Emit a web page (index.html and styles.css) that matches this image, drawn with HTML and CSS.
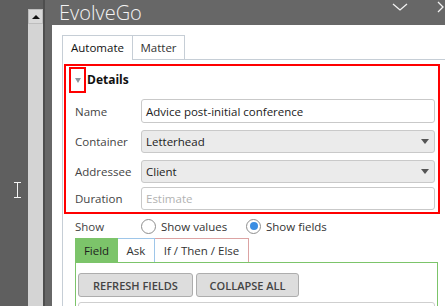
FILE: index.html
```html
<!DOCTYPE html>
<html>
<head>
<meta charset="utf-8">
<link rel="stylesheet" href="styles.css">
</head>
<body>
<div class="app">
  <div class="side">
    <svg class="ibeam" width="8" height="16" viewBox="0 0 8 16"><path d="M0 0.5H7M3.5 0.5V15.5M0 15.5H7" stroke="#f4f4f4" stroke-width="1" fill="none"/></svg>
  </div>
  <div class="scroll">
    <div class="scroll-btn"><span class="arrow-up"></span></div>
    <div class="scroll-track"></div>
  </div>
  <div class="sep"></div>
  <div class="main">
    <div class="titlebar">
      <span class="title">EvolveGo</span>
      <svg class="chev-down" width="16" height="8" viewBox="0 0 16 8"><path d="M1 1L8 7L15 1" stroke="#f2f2f2" stroke-width="1.3" fill="none"/></svg>
      <svg class="chev-right" width="8" height="12" viewBox="0 0 8 12"><path d="M1 1L6 6L1 11" stroke="#f2f2f2" stroke-width="1.3" fill="none"/></svg>
    </div>
    <div class="panel">
      <div class="tabs">
        <div class="tab active">Automate</div>
        <div class="tab matter">Matter</div>
      </div>
      <div class="tab-body">
        <div class="details">
          <div class="details-head">
            <span class="toggle"><svg width="6" height="5" viewBox="0 0 6 5"><path d="M0 0H6L3 5Z" fill="#8c979d"/></svg></span>
            <span class="details-title">Details</span>
          </div>
          <div class="row r1"><span class="lbl">Name</span><div class="field">Advice post-initial conference</div></div>
          <div class="row r2"><span class="lbl">Container</span><div class="field select">Letterhead<svg width="8" height="5" viewBox="0 0 8 5"><path d="M0 0H8L4 5Z" fill="#555"/></svg></div></div>
          <div class="row r3"><span class="lbl">Addressee</span><div class="field select">Client<svg width="8" height="5" viewBox="0 0 8 5"><path d="M0 0H8L4 5Z" fill="#555"/></svg></div></div>
          <div class="row r4"><span class="lbl">Duration</span><div class="field placeholder">Estimate</div></div>
        </div>
        <div class="show-row">
          <span class="lbl">Show</span>
          <span class="radio-item first"><span class="radio"></span>Show values</span>
          <span class="radio-item"><span class="radio checked"><span class="dot"></span></span>Show fields</span>
        </div>
        <div class="subtabs">
          <div class="st field-tab">Field</div>
          <div class="st ask-tab">Ask</div>
          <div class="st if-tab">If / Then / Else</div>
        </div>
        <div class="subbody">
          <div class="buttons">
            <div class="btn refresh">REFRESH FIELDS</div>
            <div class="btn collapse">COLLAPSE ALL</div>
          </div>
          <div class="fieldlist"></div>
        </div>
      </div>
    </div>
  </div>
</div>
</body>
</html>
```
FILE: styles.css
```css
html, body {
  margin: 0;
  padding: 0;
}
body {
  width: 445px;
  height: 306px;
  overflow: hidden;
  background: #5f5f5f;
  font-family: "Open Sans", "Noto Sans", sans-serif;
  font-size: 11.5px;
}
.app {
  display: flex;
  height: 306px;
  overflow: hidden;
}
.side {
  width: 28px;
  flex: none;
  position: relative;
  background: #5f5f5f;
}
.ibeam {
  position: absolute;
  left: 14px;
  top: 182px;
}
.scroll {
  width: 15px;
  flex: none;
  margin-top: 9px;
  display: flex;
  flex-direction: column;
}
.scroll-btn {
  height: 15px;
  flex: none;
  box-sizing: border-box;
  background: #d9d9d9;
  border: 1px solid #bdbdbd;
  display: flex;
  align-items: center;
  justify-content: center;
}
.arrow-up {
  width: 0;
  height: 0;
  border-left: 4px solid transparent;
  border-right: 4px solid transparent;
  border-bottom: 4px solid #111;
}
.scroll-track {
  flex: 1;
  background: #d4d4d4;
}
.sep {
  width: 2px;
  flex: none;
  background: #4e4e4e;
}
.main {
  flex: 1;
  display: flex;
  flex-direction: column;
  background: #676767;
  min-width: 0;
  min-height: 0;
}
.titlebar {
  height: 25px;
  flex: none;
  display: flex;
  align-items: center;
  padding-left: 14px;
  color: #f4f4f4;
  overflow: hidden;
}
.title {
  font-size: 20px;
  font-weight: 300;
  line-height: 25px;
}
.chev-down {
  margin-left: auto;
  align-self: flex-start;
  margin-top: 3px;
  flex: none;
}
.chev-right {
  margin-left: 29px;
  align-self: flex-start;
  margin-top: 1px;
  flex: none;
}
.panel {
  flex: 1;
  min-height: 0;
  overflow: hidden;
  margin-left: 7px;
  background: #fff;
  padding: 10px 0 0 10px;
  display: flex;
  flex-direction: column;
}
.tabs {
  flex: none;
  display: flex;
  align-items: flex-start;
  height: 24px;
  border-bottom: 1px solid #c6ced6;
}
.tab {
  box-sizing: border-box;
  height: 24px;
  border: 1px solid #c6ced6;
  border-bottom: none;
  display: flex;
  align-items: center;
  justify-content: center;
  color: #222;
  background: #fff;
}
.tab.active {
  width: 71px;
  height: 25px;
  padding-bottom: 1px;
  color: #111;
}
.tab.matter {
  width: 52px;
  border-left: none;
  color: #333;
}
.tab-body {
  flex: 1;
  min-height: 0;
  border-left: 1px solid #c6ced6;
  display: flex;
  flex-direction: column;
}
.details {
  flex: none;
  margin: 4px 0 0 1px;
  width: 376px;
  box-sizing: border-box;
  border: 2px solid #ff0000;
  padding-bottom: 2px;
}
.details-head {
  height: 33px;
  display: flex;
  align-items: flex-start;
}
.toggle {
  margin: 1px 0 0 3px;
  width: 17px;
  height: 26px;
  box-sizing: border-box;
  border: 2px solid #ff0000;
  display: flex;
  align-items: center;
  justify-content: center;
  padding-left: 1px;
}
.details-title {
  font-weight: 700;
  font-size: 12px;
  line-height: 26px;
  margin-top: 1px;
  margin-left: 1px;
  color: #111;
}
.row {
  display: flex;
  align-items: center;
  padding-left: 9px;
}
.lbl {
  width: 66px;
  flex: none;
  color: #444;
}
.field {
  width: 294px;
  height: 23px;
  box-sizing: border-box;
  border: 1px solid #c9c9c9;
  border-radius: 3px;
  padding-left: 4px;
  display: flex;
  align-items: center;
  color: #222;
  background: #fff;
}
.r1 .field {
  height: 24px;
}
.r2 {
  margin-top: 7px;
}
.r3 {
  margin-top: 7px;
}
.r4 {
  margin-top: 4px;
}
.select {
  background: #ebebeb;
  justify-content: space-between;
  padding-right: 5px;
}
.placeholder {
  color: #b2b2b2;
}
.show-row {
  flex: none;
  height: 24px;
  display: flex;
  align-items: center;
  padding-left: 12px;
  color: #333;
}
.radio-item {
  display: flex;
  align-items: center;
}
.radio-item.first {
  width: 105px;
}
.radio {
  width: 15px;
  height: 15px;
  box-sizing: border-box;
  border: 1px solid #8e8e8e;
  border-radius: 50%;
  background: #fff;
  margin-right: 5px;
  display: flex;
  align-items: center;
  justify-content: center;
}
.dot {
  width: 8px;
  height: 8px;
  border-radius: 50%;
  background: #3b8de2;
}
.subtabs {
  flex: none;
  display: flex;
  margin-left: 12px;
  height: 24px;
}
.st {
  box-sizing: border-box;
  height: 24px;
  display: flex;
  align-items: center;
  justify-content: center;
  color: #333;
}
.field-tab {
  width: 43px;
  background: #7cc46a;
  color: #1e1e1e;
}
.ask-tab {
  width: 37px;
  border: 1px solid #9ec6e9;
  border-bottom: none;
  border-left: none;
}
.if-tab {
  width: 94px;
  border: 1px solid #dca3a3;
  border-bottom: none;
  border-left: none;
}
.subbody {
  flex: 1 0 auto;
  margin-left: 12px;
  width: 363px;
  box-sizing: border-box;
  border: 1px solid #7cc46a;
  border-bottom: none;
  padding: 10px 0 0 2px;
}
.buttons {
  display: flex;
}
.btn {
  height: 24px;
  box-sizing: border-box;
  border: 1px solid #adadad;
  border-radius: 3px;
  background: #dddddd;
  font-weight: 600;
  font-size: 11px;
  color: #444;
  display: flex;
  align-items: center;
  justify-content: center;
}
.refresh {
  width: 115px;
}
.collapse {
  width: 103px;
  margin-left: 3px;
}
.fieldlist {
  margin-top: 5px;
  width: 357px;
  height: 20px;
  box-sizing: border-box;
  border: 1px solid #cfcfcf;
  border-radius: 3px;
}
```
